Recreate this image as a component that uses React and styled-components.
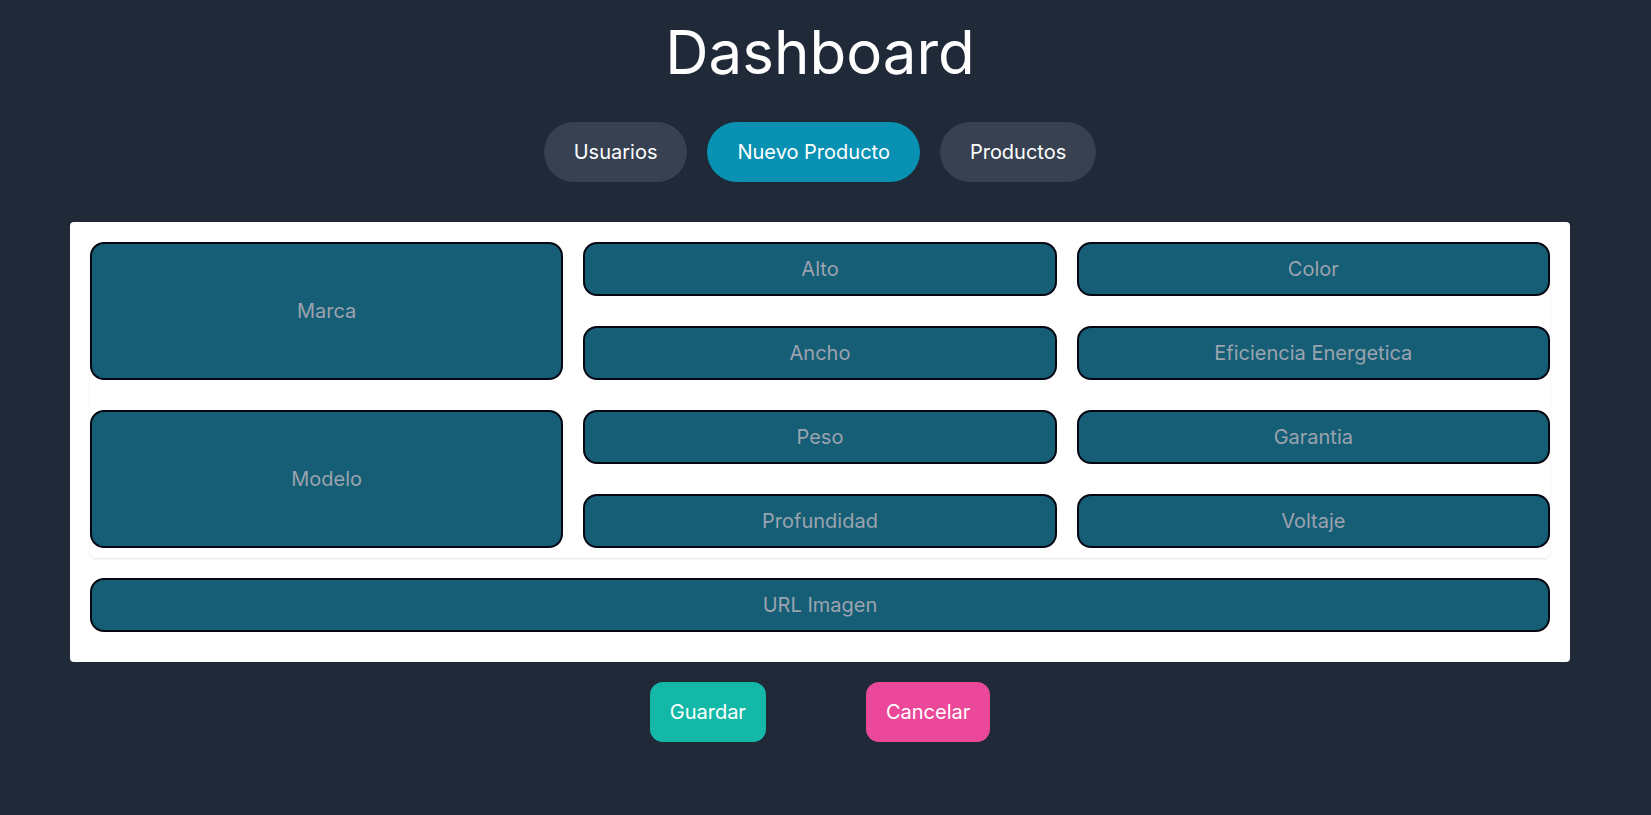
import React from 'react';
import styled, { createGlobalStyle } from 'styled-components';

const GlobalStyle = createGlobalStyle`
    * {
        box-sizing: border-box;
    }
    body {
        margin: 0;
        background: #1f2937;
        font-family: Inter, "Noto Sans", sans-serif;
    }
`;

const Page = styled.div`
    width: 1640px;
    min-height: 100vh;
    display: flex;
    flex-direction: column;
    align-items: center;
    padding-top: 22px;
`;

const Title = styled.h1`
    margin: 0;
    color: #FFF;
    font-size: 60px;
    font-weight: 400;
    line-height: 1;
`;

const Tabs = styled.nav`
    display: flex;
    gap: 20px;
    margin-top: 40px;
`;

const Tab = styled.button`
    height: 60px;
    padding: 0 30px;
    border: none;
    border-radius: 30px;
    background: ${props => props.$active ? '#0891b2' : '#374151'};
    color: #FFF;
    font-family: inherit;
    font-size: 20px;
    cursor: pointer;
`;

const Card = styled.form`
    width: 1500px;
    margin-top: 40px;
    padding: 20px;
    background: #FFF;
    border-radius: 4px;
`;

const FieldGrid = styled.div`
    display: grid;
    grid-template-columns: repeat(3, 1fr);
    grid-auto-rows: 54px;
    column-gap: 20px;
    row-gap: 30px;
    padding-bottom: 10px;
    border-radius: 6px;
    background: #FFF;
    box-shadow: 0 1px 3px rgba(0, 0, 0, 0.08), 0 1px 2px -1px rgba(0, 0, 0, 0.08);
`;

const Field = styled.input`
    width: 100%;
    height: 100%;
    grid-row: ${props => props.$tall ? 'span 2' : 'auto'};
    border: 2px solid #030712;
    border-radius: 14px;
    background: #155e75;
    color: #FFF;
    font-family: inherit;
    font-size: 20px;
    text-align: center;
    outline: none;

    &::placeholder {
        color: #9ca3af;
    }
`;

const WideField = styled(Field)`
    display: block;
    height: 54px;
    margin-top: 20px;
    margin-bottom: 10px;
`;

const Actions = styled.div`
    display: flex;
    gap: 100px;
    margin-top: 20px;
`;

const ActionButton = styled.button`
    height: 60px;
    padding: 0 20px;
    border: none;
    border-radius: 13px;
    background: ${props => props.$tone === 'save' ? '#14b8a6' : '#ec4899'};
    color: #FFF;
    font-family: inherit;
    font-size: 20px;
    cursor: pointer;
`;

const tabs = ['Usuarios', 'Nuevo Producto', 'Productos'];

function App() {
    return (
        <>
            <GlobalStyle />
            <Page>
                <Title>Dashboard</Title>
                <Tabs>
                    {tabs.map(t => (
                        <Tab key={t} $active={t === 'Nuevo Producto'}>{t}</Tab>
                    ))}
                </Tabs>
                <Card onSubmit={e => e.preventDefault()}>
                    <FieldGrid>
                        <Field $tall placeholder="Marca" />
                        <Field placeholder="Alto" />
                        <Field placeholder="Color" />
                        <Field placeholder="Ancho" />
                        <Field placeholder="Eficiencia Energetica" />
                        <Field $tall placeholder="Modelo" />
                        <Field placeholder="Peso" />
                        <Field placeholder="Garantia" />
                        <Field placeholder="Profundidad" />
                        <Field placeholder="Voltaje" />
                    </FieldGrid>
                    <WideField placeholder="URL Imagen" />
                </Card>
                <Actions>
                    <ActionButton $tone="save">Guardar</ActionButton>
                    <ActionButton $tone="cancel">Cancelar</ActionButton>
                </Actions>
            </Page>
        </>
    );
}

export default App;
